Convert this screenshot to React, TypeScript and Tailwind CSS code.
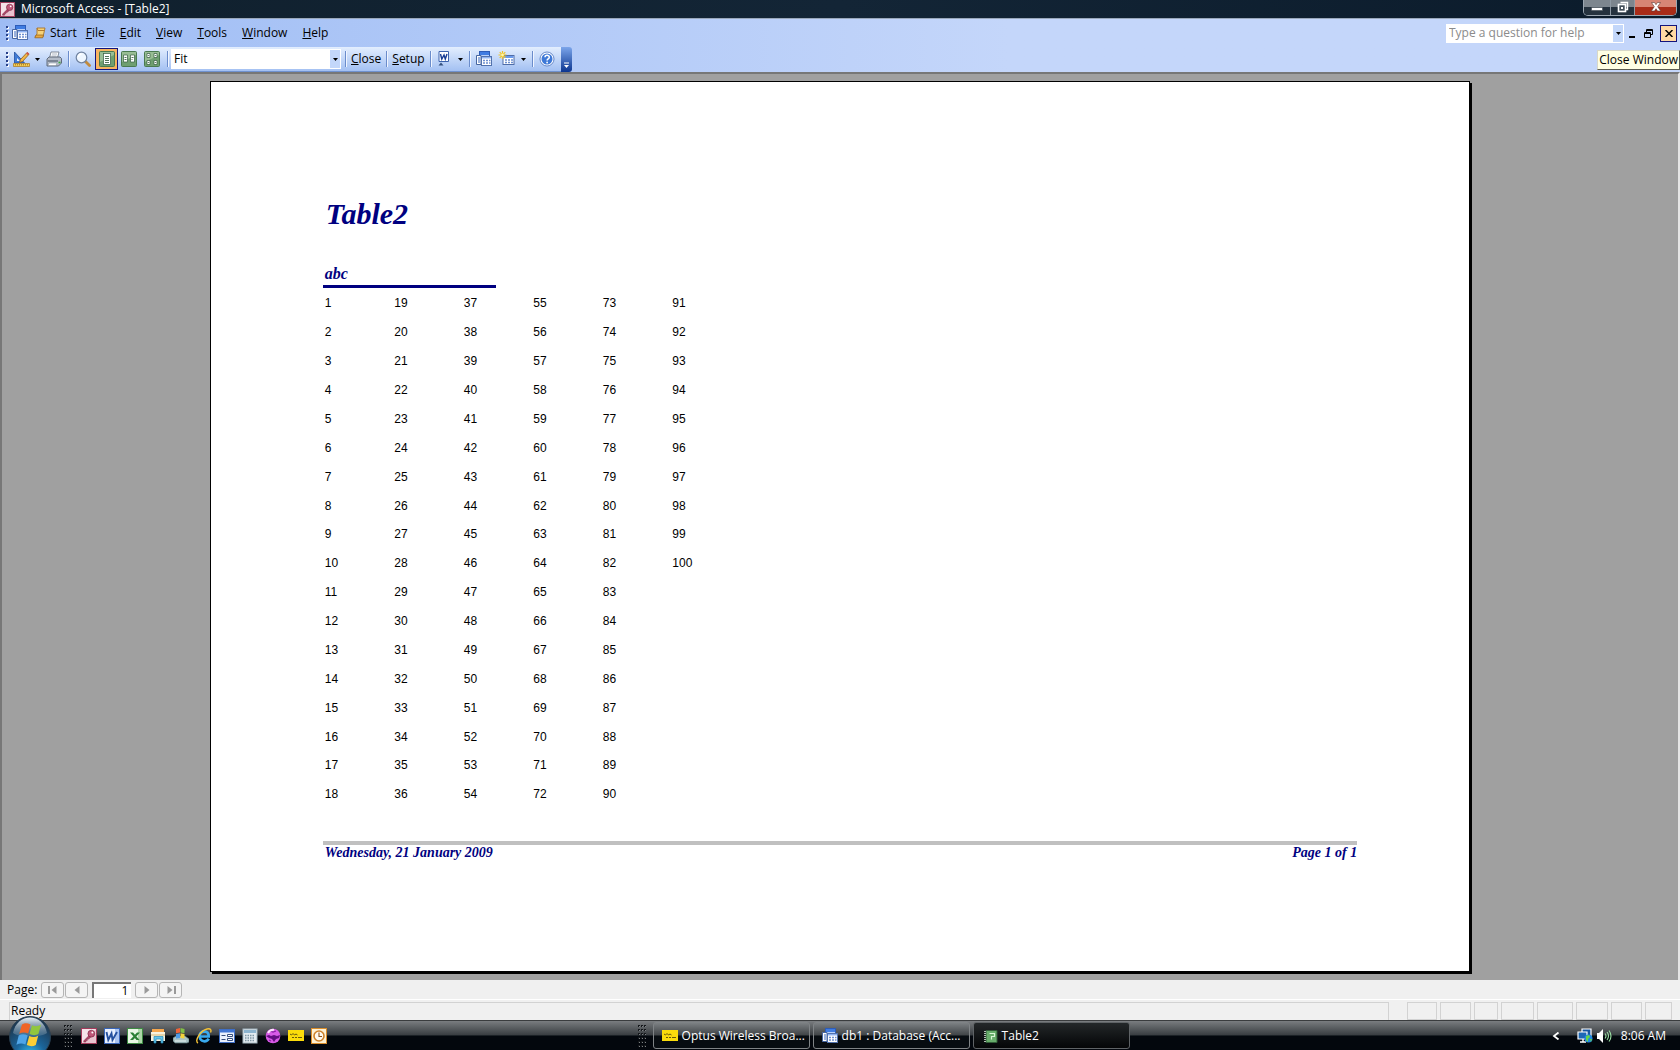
import type { ReactNode } from "react";

const MENUS = ["File", "Edit", "View", "Tools", "Window", "Help"];

const ROWS = 18;
const COLUMNS = 6;
const LAST_VALUE = 100;
// The fifth column ends at 90, the sixth holds the remaining ten values
const rowValues = (row: number) =>
    Array.from({ length: COLUMNS }, (_, col) => col * ROWS + row + 1).map((n) => (n <= LAST_VALUE ? n : null));

const STATUS_CELLS = ["w-[30px]", "w-[31px]", "w-[24px]", "w-[33px]", "w-[36px]", "w-[32px]", "w-[31px]", "w-[27px]"];

function Icon({ children, className = "w-4 h-4" }: { children: ReactNode; className?: string }) {
    return (
        <svg viewBox="0 0 16 16" className={`${className} shrink-0`} aria-hidden="true">
            {children}
        </svg>
    );
}

function Caret({ className = "" }: { className?: string }) {
    return (
        <svg viewBox="0 0 5 3" className={`w-[5px] h-[3px] shrink-0 ${className}`} aria-hidden="true">
            <path d="M0 0h5L2.500 3z" fill="#000" />
        </svg>
    );
}

function Grip() {
    return (
        <svg viewBox="0 0 3 15" className="w-[3px] h-[15px] shrink-0" aria-hidden="true">
            {[0, 4, 8, 12].map((y) => (
                <g key={y}>
                    <rect x="1" y={y + 1} width="2" height="2" fill="#fff" />
                    <rect x="0" y={y} width="2" height="2" fill="#27418a" />
                </g>
            ))}
        </svg>
    );
}

function TaskGrip() {
    return (
        <svg viewBox="0 0 9 22" className="w-[9px] h-[22px] shrink-0" aria-hidden="true">
            {[0, 4, 8, 12, 16, 20].map((y) =>
                [0, 3, 6].map((x) => (
                    <g key={`${x}-${y}`}>
                        <rect x={x} y={y} width="2" height="2" fill="#15181b" />
                        <rect x={x + 1} y={y + 1} width="1" height="1" fill="#7c8084" />
                    </g>
                ))
            )}
        </svg>
    );
}

function Separator() {
    return <span className="w-px h-4 bg-[#6a8ccb] shadow-[1px_0_0_#f0f5ff] shrink-0" />;
}

function KeyIcon({ className }: { className?: string }) {
    return (
        <Icon className={className}>
            <rect x="0.5" y="0.5" width="15" height="15" fill="#f6e3e9" stroke="#a43c5c" />
            <path d="M1 15L15 1v14z" fill="#e9c3cf" />
            <path d="M8 7.500l-5.200 5.300V14h2v-1.400h1.400v-1.500h1.300L9.500 9.500z" fill="#b0486a" stroke="#7d2440" strokeWidth=".5" />
            <circle cx="10.300" cy="5.700" r="3.400" fill="#c0587a" stroke="#7d2440" strokeWidth=".7" />
            <circle cx="11.400" cy="4.600" r="1" fill="#fff" />
        </Icon>
    );
}

function DatabaseIcon({ className }: { className?: string }) {
    return (
        <Icon className={className}>
            <rect x="3.500" y=".5" width="10" height="9" fill="#b9d2fb" stroke="#2d5cb8" />
            <path d="M4 1h9v3H4z" fill="#3f7ce2" />
            <path d="M.5 4.500H5v9H.5z" fill="#fff" stroke="#46659f" />
            <path d="M2 7h2M2 9h2M2 11h2" stroke="#3565bd" />
            <rect x="5.500" y="5.500" width="10" height="9" fill="#fff" stroke="#5272ad" />
            <path d="M6 6h9v1.500H6z" fill="#8fb3f2" />
            <path d="M7 9.500h2M10 9.500h2M13 9.500h1.500M7 12h2M10 12h2M13 12h1.500" stroke="#6c8fd0" strokeWidth="1.300" />
        </Icon>
    );
}

function PageViewIcon({ pages }: { pages: 1 | 2 | 4 }) {
    return (
        <Icon>
            <rect x=".5" y=".5" width="15" height="15" rx="1" fill="#6f9f70" stroke="#4a7a50" />
            <path d="M1 1h14v3L1 11z" fill="#b4d2ac" opacity=".6" />
            {pages === 1 && (
                <>
                    <rect x="4.500" y="2.500" width="7" height="11" fill="#fff" stroke="#355b40" strokeWidth=".7" />
                    <path d="M6 5.500h4M6 7.500h4M6 9.500h4M6 11.500h4" stroke="#42654b" strokeWidth=".9" />
                </>
            )}
            {pages === 2 && (
                <>
                    <path d="M2.500 4h4v7h-4zM9.500 4h4v7h-4z" fill="#fff" stroke="#355b40" strokeWidth=".7" />
                    <path d="M3.500 6.500h2M3.500 8.500h2M10.500 6.500h2M10.500 8.500h1" stroke="#42654b" strokeWidth=".9" />
                </>
            )}
            {pages === 4 && (
                <>
                    <path d="M3 2.500h3v4H3zM10 2.500h3v4h-3zM3 9.500h3v4H3zM10 9.500h3v4h-3z" fill="#fff" stroke="#355b40" strokeWidth=".7" />
                    <path d="M3.800 4.500h1.400M10.800 4.500h1.400M3.800 11.500h1.400M10.800 11.500h1.400" stroke="#42654b" strokeWidth=".8" />
                </>
            )}
        </Icon>
    );
}

function DesignIcon() {
    return (
        <Icon className="w-[17px] h-4">
            <path d="M1 1v11h10z" fill="#3f7bd6" stroke="#204f9f" strokeWidth=".8" />
            <path d="M3.500 7v3h3z" fill="#e7f1ff" />
            <path d="M0 12.500h16v3H0z" fill="#f6cf52" stroke="#a9751c" strokeWidth=".7" />
            <path d="M2 13v1.500M4 13v1.500M6 13v1.500M8 13v1.500M10 13v1.500M12 13v1.500M14 13v1.500" stroke="#865c16" strokeWidth=".6" />
            <path d="M6 11.500l1-3L13.500 1.500l2 1.800L9 10.500z" fill="#f3b847" stroke="#8c5b19" strokeWidth=".8" />
            <path d="M12.600 2.500l1.200-1.600 2 1.800-1.300 1.500z" fill="#cf554c" />
        </Icon>
    );
}

function PrinterIcon() {
    return (
        <Icon>
            <path d="M5 1h8l-1.500 6h-8z" fill="#fff" stroke="#65707f" strokeWidth=".8" />
            <path d="M6 3h5M5.500 5h5" stroke="#9da6b5" strokeWidth=".8" />
            <path d="M1 8l2-2h11l1.500 1.500V12l-3 3H1z" fill="#b4bcc8" stroke="#566070" strokeWidth=".9" />
            <path d="M1.500 9h10.500v2H1.500z" fill="#7b8594" />
            <path d="M3 12h8l-1 2.500H2z" fill="#fff" stroke="#7b8594" strokeWidth=".5" />
            <path d="M12.500 11.500h2" stroke="#38a83e" strokeWidth="1.600" />
        </Icon>
    );
}

function MagnifierIcon() {
    return (
        <Icon>
            <path d="M10.500 10.500l4 4" stroke="#c28b3e" strokeWidth="2.800" strokeLinecap="round" />
            <circle cx="6.500" cy="6.500" r="5.300" fill="#eef6ff" stroke="#7184a1" strokeWidth="1.200" />
            <path d="M3.500 6a3.300 3.300 0 013-3" stroke="#fff" strokeWidth="1.400" fill="none" />
        </Icon>
    );
}

function WordLinkIcon() {
    return (
        <Icon>
            <path d="M3 .5h9.500v10H3z" fill="#fff" stroke="#3c62ad" />
            <path d="M4.500 3l1.300 5L8 4l1.300 4L11 3" fill="none" stroke="#173c94" strokeWidth="1.400" />
            <path d="M2.500 14.500h5L5 11.500z" fill="#33507f" />
        </Icon>
    );
}

function NewObjectIcon() {
    return (
        <Icon className="w-[17px] h-4">
            <rect x="4.500" y="4.500" width="11" height="9" fill="#fff" stroke="#4f6da8" />
            <path d="M5 5h10v2H5z" fill="#6b9bed" />
            <path d="M6.500 9h2M9.500 9h2M12.500 9h2M6.500 11.500h2M9.500 11.500h2M12.500 11.500h2" stroke="#6c8fd0" strokeWidth="1.300" />
            <path d="M4 0v8M0 4h8M1.200 1.200l5.600 5.600M6.800 1.200L1.200 6.800" stroke="#f0c323" strokeWidth="1.200" />
            <circle cx="4" cy="4" r="1.400" fill="#fff6a8" />
        </Icon>
    );
}

function HelpIcon() {
    return (
        <Icon>
            <circle cx="8" cy="8" r="7" fill="#fff" stroke="#4770bd" strokeWidth=".8" />
            <circle cx="8" cy="8" r="5.500" fill="#3e79d7" />
            <path d="M6 6.300C6 3.700 10.300 3.700 10.300 6.200c0 1.600-2.200 1.700-2.200 3.300" fill="none" stroke="#fff" strokeWidth="1.500" />
            <circle cx="8.100" cy="11.500" r=".9" fill="#fff" />
        </Icon>
    );
}

function ScrollIcon() {
    return (
        <svg viewBox="0 0 12 12" className="w-3 h-3 shrink-0" aria-hidden="true">
            <path d="M3 1h8L9 10H1l2-3z" fill="#f7d379" stroke="#a8742a" strokeWidth=".9" />
            <path d="M3 1l1 2.500h6" fill="none" stroke="#b17b31" />
            <path d="M.8 10.800L2 8h7.500l-.8 2.800z" fill="#e7a93f" stroke="#916021" strokeWidth=".7" />
        </svg>
    );
}

function LetterTile({ kind }: { kind: "word" | "excel" }) {
    const word = kind === "word";
    return (
        <Icon>
            <rect x=".5" y=".5" width="15" height="15" fill={word ? "#e8f0ff" : "#e9f7e6"} stroke={word ? "#3a66b8" : "#3e8a43"} />
            <path d="M11 1h4v14h-4z" fill={word ? "#aac4f1" : "#acd6a8"} />
            {word ? (
                <path d="M2.500 4l1.800 8L7.500 5.500 8.500 12l4.500-8" fill="none" stroke="#24509f" strokeWidth="1.900" />
            ) : (
                <path d="M3 4.500h3l6.500 7.500H9.500zM10 4.500h3L6 12H3z" fill="#2b8035" />
            )}
        </Icon>
    );
}

function OptusIcon() {
    return (
        <svg viewBox="0 0 16 11" className="w-4 h-[11px] shrink-0" aria-hidden="true">
            <rect width="16" height="11" fill="#fbdc0b" />
            <path d="M2 4l1.500 1L5 3.500 6.500 5 8 4l1.500 1M4 7.500h2M7 7.500h2M10 7.500h4" stroke="#66560d" strokeWidth="1" fill="none" />
        </svg>
    );
}

const QUICK_LAUNCH: { name: string; icon: ReactNode }[] = [
    { name: "Microsoft Access", icon: <KeyIcon /> },
    { name: "Microsoft Word", icon: <LetterTile kind="word" /> },
    { name: "Microsoft Excel", icon: <LetterTile kind="excel" /> },
    {
        name: "Explorer",
        icon: (
            <Icon>
                <path d="M2 1h12v5H2z" fill="#f5a64e" />
                <path d="M1 4h14v9H1z" fill="#f7f2df" />
                <path d="M1 7h14" stroke="#d5b777" />
                <path d="M4 15V8.500h9V15h-2v-4H6v4z" fill="#64c3ea" stroke="#248bb9" strokeWidth=".7" />
            </Icon>
        ),
    },
    {
        name: "Messenger",
        icon: (
            <Icon>
                <path d="M0 10l3-2h9l4 3v3l-2 1H2l-2-2z" fill="#a9c3c6" stroke="#5b767a" strokeWidth=".7" />
                <path d="M3 1l4-1v4.500l-4 .8z" fill="#ef6338" />
                <path d="M7.500 0l4 1v4.300l-4-.8z" fill="#82be45" />
                <path d="M3 6l4-.8V10l-4 .5z" fill="#4f9be6" />
                <path d="M7.500 5.200l4 .8v4.500l-4-.5z" fill="#f3d33b" />
                <path d="M2 13h11" stroke="#e8f2f1" />
            </Icon>
        ),
    },
    {
        name: "Internet Explorer",
        icon: (
            <Icon>
                <path d="M12.800 10.800A5 5 0 118.200 3.300c2.800 0 4.600 2 4.500 5.200H4.500" fill="none" stroke="#39a9ee" strokeWidth="2.700" />
                <path d="M2 15C-2 13 4.500 2.500 11 1c4-1 4.500 1.500 3.500 3.500" fill="none" stroke="#f4c136" strokeWidth="1.400" />
            </Icon>
        ),
    },
    {
        name: "Form",
        icon: (
            <Icon>
                <rect x=".5" y="1.500" width="15" height="13" fill="#e9f0fd" stroke="#3f6ec5" />
                <path d="M1 2h14v2.500H1z" fill="#3f75d4" />
                <path d="M2.500 7.500h4M2.500 11.500h4" stroke="#354d7c" />
                <path d="M8.500 6.500h5v2h-5zM8.500 10.500h5v2h-5z" fill="#fff" stroke="#354d7c" />
            </Icon>
        ),
    },
    {
        name: "Calculator",
        icon: (
            <Icon>
                <rect x="1" y="1" width="14" height="14" fill="#e3ebf0" stroke="#a5b8c2" />
                <path d="M2 2h12v3H2z" fill="#8db4cf" />
                <path d="M3 7.500h10M3 10h10M3 12.500h10" stroke="#7d95a3" strokeWidth="1.300" strokeDasharray="1.500 1" />
            </Icon>
        ),
    },
    {
        name: "Globe",
        icon: (
            <Icon>
                <circle cx="8" cy="8" r="7.300" fill="#d95be8" />
                <path d="M1 8l3-1 2 1 3-1 3 1 3-1-1 3-3 1-2 3-2-3-3-1z" fill="#650e82" />
                <path d="M5 3l3 1 3-1M4 12l2 1" stroke="#8a1fa6" strokeWidth="1.200" fill="none" />
                <path d="M3 5A6 6 0 019 1.800" stroke="#ffe4ff" strokeWidth="1.800" fill="none" />
            </Icon>
        ),
    },
    { name: "Optus", icon: <OptusIcon /> },
    {
        name: "Outlook",
        icon: (
            <Icon>
                <rect x=".5" y=".5" width="15" height="15" fill="#fff1d2" stroke="#d98d2b" />
                <circle cx="8" cy="8" r="5" fill="#fffaf0" stroke="#cf8129" strokeWidth="1.600" />
                <path d="M8 4.500V8.500h3" stroke="#8c5119" strokeWidth="1.100" fill="none" />
            </Icon>
        ),
    },
];

const TASKS = [
    { title: "Optus Wireless Broa...", icon: <OptusIcon />, active: false },
    { title: "db1 : Database (Acc...", icon: <DatabaseIcon />, active: false },
    {
        title: "Table2",
        icon: (
            <Icon>
                <path d="M4 2.500h11v12H4z" fill="#68ad6b" stroke="#315d38" />
                <path d="M7.500 5.500h5v3h-3v3" fill="none" stroke="#d8f5d5" strokeWidth="1.200" />
                <path d="M3 3v12" stroke="#e8f3e8" strokeWidth="1.500" strokeDasharray="1 1" />
            </Icon>
        ),
        active: true,
    },
];

function TitleBar() {
    return (
        <header className="h-[19px] flex items-start justify-between bg-linear-to-r from-[#10202d] via-[#132536] to-[#0b1b2b] border-b border-[#9aa8bb]">
            <div className="flex items-center h-[18px] gap-[6px]">
                <KeyIcon className="w-[15px] h-[15px]" />
                <h1 className="text-[12px] leading-4 text-white">Microsoft Access - [Table2]</h1>
            </div>
            <div className="flex h-4 mr-[3px] rounded-b-[5px] border border-t-0 border-[#9ba6b0] overflow-hidden">
                <button aria-label="Minimize" className="w-[27px] flex justify-center bg-linear-to-b from-[#7d868e] from-45% to-[#25323e] to-50% border-r border-[#8e99a3]">
                    <svg viewBox="0 0 12 15" className="w-3 h-[15px]">
                        <rect x=".5" y="7.500" width="11" height="3" fill="#fff" stroke="#3d4650" strokeWidth=".6" />
                    </svg>
                </button>
                <button aria-label="Restore" className="w-6 flex justify-center bg-linear-to-b from-[#7d868e] from-45% to-[#25323e] to-50% border-r border-[#8e99a3]">
                    <svg viewBox="0 0 12 15" className="w-3 h-[15px]">
                        <path d="M3.500 2.500h7v7h-2" fill="none" stroke="#fff" strokeWidth="1.400" />
                        <rect x="1.500" y="4.500" width="7" height="7" fill="#44505b" stroke="#fff" strokeWidth="1.600" />
                        <rect x="4" y="7" width="2" height="2" fill="#fff" />
                    </svg>
                </button>
                <button aria-label="Close" className="w-[41px] flex justify-center bg-linear-to-b from-[#d78574] from-45% to-[#a92c18] to-50%">
                    <svg viewBox="0 0 12 15" className="w-3 h-[15px]">
                        <path d="M1.500 2.500h3L6 4.700l1.500-2.200h3L7.700 6.700l3 4.300h-3.200L6 8.700 4.500 11H1.300l3-4.300z" fill="#fff" stroke="#5c3a36" strokeWidth=".6" />
                    </svg>
                </button>
            </div>
        </header>
    );
}

function MenuBar() {
    return (
        <div className="h-7 flex items-center justify-between pl-[6px] pr-[3px]">
            <nav className="flex items-center text-[12px] leading-4">
                <Grip />
                <span className="flex ml-[3px] mr-[6px]"><DatabaseIcon /></span>
                <button className="flex items-center gap-1 mr-[9px]">
                    <ScrollIcon />
                    Start
                </button>
                <div className="flex gap-[15px]">
                    {MENUS.map((menu) => (
                        <button key={menu}>
                            <u>{menu[0]}</u>{menu.slice(1)}
                        </button>
                    ))}
                </div>
            </nav>
            <div className="flex items-center">
                <div className="flex h-[19px] w-[178px] bg-white">
                    <input
                        aria-label="Type a question for help"
                        placeholder="Type a question for help"
                        className="flex-1 min-w-0 pl-[3px] text-[12px] leading-4 outline-none placeholder:text-[#8b8b8b]"
                    />
                    <button aria-label="Recent questions" className="w-3 flex items-center justify-center bg-[#c3d7fa] border border-white">
                        <Caret />
                    </button>
                </div>
                <button aria-label="Minimize Window" className="ml-[5px] w-[7px] h-4 flex items-end pb-[3px]">
                    <span className="w-[6px] h-[2px] bg-black" />
                </button>
                <button aria-label="Restore Window" className="ml-2">
                    <svg viewBox="0 0 9 9" className="w-[9px] h-[9px] block">
                        <path d="M2.500 3V.5h6v5H6.500M2.500 1.500h6" fill="none" stroke="#000" />
                        <path d="M.5 3.500h6v5h-6zM.5 4.500h6" fill="none" stroke="#000" />
                    </svg>
                </button>
                <button aria-label="Close Window" className="ml-[7px] w-[17px] h-[17px] flex items-center justify-center bg-[#ffd9a5] border border-[#14147c]">
                    <svg viewBox="0 0 8 7" className="w-2 h-[7px]">
                        <path d="M.5 0l7 7M7.500 0l-7 7" stroke="#000" strokeWidth="1.500" />
                    </svg>
                </button>
            </div>
        </div>
    );
}

function Toolbar() {
    return (
        <div className="flex h-[25px]">
            <div className="flex items-center pl-[6px] bg-linear-to-b from-[#e3eefe] to-[#a3c0f2] border-b border-[#7092cf] text-[12px] leading-4">
                <Grip />
                <button aria-label="Design view" className="flex items-center gap-[5px] ml-1">
                    <DesignIcon />
                    <Caret />
                </button>
                <button aria-label="Print" className="flex mx-[6px]"><PrinterIcon /></button>
                <Separator />
                <button aria-label="Zoom" className="flex ml-[6px]"><MagnifierIcon /></button>
                <button aria-label="One page" className="ml-1 w-[23px] h-[22px] flex items-center justify-center border border-[#14147c] bg-[#f8b45f]">
                    <PageViewIcon pages={1} />
                </button>
                <button aria-label="Two pages" className="flex ml-[3px]"><PageViewIcon pages={2} /></button>
                <button aria-label="Multiple pages" className="flex mx-[7px]"><PageViewIcon pages={4} /></button>
                <Separator />
                <div className="flex items-center h-5 w-[170px] ml-[3px] mr-1 bg-white relative">
                    <select aria-label="Zoom level" className="appearance-none w-full h-5 pl-[3px] outline-none">
                        <option>Fit</option>
                    </select>
                    <span className="absolute right-0 inset-y-0 w-3 flex items-center justify-center bg-[#c3d7fa] border border-white pointer-events-none">
                        <Caret />
                    </span>
                </div>
                <Separator />
                <button className="mx-[5px]"><u>C</u>lose</button>
                <Separator />
                <button className="mx-[5px]"><u>S</u>etup</button>
                <Separator />
                <button aria-label="Office links" className="flex items-center gap-[6px] mx-[5px]">
                    <WordLinkIcon />
                    <Caret className="mr-px" />
                </button>
                <Separator />
                <button aria-label="Database window" className="flex ml-[6px]"><DatabaseIcon /></button>
                <button aria-label="New object" className="flex items-center gap-[6px] mx-[6px]">
                    <NewObjectIcon />
                    <Caret />
                </button>
                <Separator />
                <button aria-label="Help" className="flex mx-[6px]"><HelpIcon /></button>
            </div>
            <button aria-label="Toolbar options" className="w-[11px] flex items-end justify-center pb-[3px] rounded-r-[3px] bg-linear-to-b from-[#7ca5ea] to-[#0c3590]">
                <svg viewBox="0 0 7 7" className="w-[7px] h-[7px]">
                    <path d="M1 1h5" stroke="#fff" />
                    <path d="M1 3h5L3.500 6z" fill="#fff" />
                </svg>
            </button>
        </div>
    );
}

function ReportPage() {
    return (
        <article className="w-[75.2%] aspect-[297/210] px-[112px] pt-[114px] bg-white border border-black shadow-[2px_2px_0_#000] text-[#000080]">
            <h2 className="pl-[3px] font-['Liberation_Serif',serif] font-bold italic text-[30px] leading-9">Table2</h2>
            <table className="mt-7 w-[417px] h-[549px] table-fixed border-collapse font-['Liberation_Sans',sans-serif] text-[12px] leading-4 text-black">
                <thead>
                    <tr className="h-[29px]">
                        <th colSpan={6} scope="col" className="text-left p-0">
                            <span className="block w-[173px] h-[26px] pl-[2px] pt-[2px] border-b-[3px] border-[#000080] font-['Liberation_Serif',serif] font-bold italic text-[16px] leading-5 text-[#000080]">
                                abc
                            </span>
                        </th>
                    </tr>
                </thead>
                <tbody>
                    {Array.from({ length: ROWS }, (_, row) => (
                        <tr key={row}>
                            {rowValues(row).map((value, col) => (
                                <td key={col} className="p-0 pl-[2px] align-middle">{value}</td>
                            ))}
                        </tr>
                    ))}
                </tbody>
            </table>
            <footer className="mt-8 pl-[2px] flex justify-between border-t-4 border-[#c0c0c0] font-['Liberation_Serif',serif] font-bold italic text-[14px] leading-4">
                <span>Wednesday, 21 January 2009</span>
                <span>Page 1 of 1</span>
            </footer>
        </article>
    );
}

function NavButton({ label, d }: { label: string; d: string }) {
    return (
        <button aria-label={label} className="w-[23px] h-4 flex items-center justify-center rounded-[3px] border border-[#b5b5b5] bg-[#f4f4f4]">
            <svg viewBox="0 0 10 8" className="w-[10px] h-2">
                <path d={d} fill="#9a9a9a" />
            </svg>
        </button>
    );
}

function PageNavigator() {
    return (
        <div className="h-5 flex items-center pl-[7px] bg-[#f0f0f0] border-b border-white text-[12px] leading-4">
            <label htmlFor="page-number" className="mr-1">Page:</label>
            <div className="flex gap-px">
                <NavButton label="First page" d="M0 0h2v8H0zM8.500 0v8L3.500 4z" />
                <NavButton label="Previous page" d="M7.500 0v8L2.500 4z" />
            </div>
            <input
                id="page-number"
                defaultValue="1"
                className="w-[39px] h-4 mx-1 pr-[3px] text-right bg-white border-t-2 border-l-2 border-[#777] outline-none"
            />
            <div className="flex gap-px">
                <NavButton label="Next page" d="M2.500 0v8l5-4z" />
                <NavButton label="Last page" d="M8 0h2v8H8zM1.500 0v8l5-4z" />
            </div>
        </div>
    );
}

function StatusBar() {
    return (
        <div className="h-5 flex pt-[2px] pl-[9px] pr-2 bg-[#f0f0f0] text-[12px] leading-4">
            <div className="flex-1 mr-[18px] pl-px border border-b-0 border-[#d2d2d2]">Ready</div>
            <div className="flex gap-[3px]">
                {STATUS_CELLS.map((width, i) => (
                    <span key={i} className={`${width} border border-[#d2d2d2]`} />
                ))}
            </div>
        </div>
    );
}

function Taskbar() {
    return (
        <div className="h-[30px] flex items-center bg-linear-to-b from-[#7a7d80] from-0% via-[#3a3e42] via-48% to-[#03070d] to-52% border-t border-[#3a3c3e] text-[12px] leading-4 text-white">
            <button aria-label="Start menu" className="w-[43px] h-[30px] ml-[9px] flex items-end shrink-0 z-10">
                <svg viewBox="0 0 43 35" className="w-[43px] h-[35px] shrink-0">
                    <defs>
                        <radialGradient id="orb" cx="50%" cy="95%" r="80%">
                            <stop offset="0" stopColor="#35c3f2" />
                            <stop offset=".45" stopColor="#1b659b" />
                            <stop offset="1" stopColor="#1d3a54" />
                        </radialGradient>
                        <linearGradient id="gloss" x1="0" y1="0" x2="0" y2="1">
                            <stop offset="0" stopColor="#e8f1f7" />
                            <stop offset="1" stopColor="#7893a8" stopOpacity=".3" />
                        </linearGradient>
                    </defs>
                    <circle cx="21" cy="21" r="20.500" fill="url(#orb)" stroke="#2a4052" />
                    <path d="M4 17C6 7 13 1.500 21 1.500S36 7 38 17C30 22 12 22 4 17z" fill="url(#gloss)" />
                    <path d="M13 8.500c3-2 5.500-1.500 8.500 0l-2.300 9c-3-1.500-6-1.500-9 .2z" fill="#ef6527" />
                    <path d="M23 9.300c3 1.300 6 1.300 9-.7l-2.500 9.200c-3 2-6 1.700-9 .3z" fill="#91c73e" />
                    <path d="M9.700 19.500c3-1.800 6-1.500 9 0l-2.300 9c-3-1.500-6-1.500-9 .3z" fill="#4fa5e8" />
                    <path d="M20.200 20c3 1.500 6 1.500 9-.3l-2.400 9.200c-3 2-6 1.500-9 .2z" fill="#fbce36" />
                </svg>
            </button>
            <div className="flex flex-1 items-center pl-3">
                <TaskGrip />
                <div className="flex items-center gap-[7px] ml-2">
                    {QUICK_LAUNCH.map((item) => (
                        <button key={item.name} aria-label={item.name}>{item.icon}</button>
                    ))}
                </div>
            </div>
            <div className="w-[63%] flex items-center shrink-0">
                <div className="flex flex-1 items-center gap-[3px] pl-[16px]">
                    <TaskGrip />
                    <div className="flex gap-[3px] ml-[3px]">
                        {TASKS.map((task) => (
                            <button
                                key={task.title}
                                className={`w-[157px] h-[27px] flex items-center gap-1 pl-2 whitespace-nowrap rounded-[3px] border ${
                                    task.active
                                        ? "border-[#5f6366] bg-linear-to-b from-[#24282a] to-[#050607]"
                                        : "border-[#7f8386] bg-linear-to-b from-[#7c8083] from-0% via-[#414548] via-48% to-[#070c11] to-52%"
                                }`}
                            >
                                {task.icon}
                                <span>{task.title}</span>
                            </button>
                        ))}
                    </div>
                </div>
                <div className="flex items-center pr-[14px]">
                    <button aria-label="Show hidden icons">
                        <svg viewBox="0 0 8 8" className="w-2 h-2 block">
                            <path d="M6.500 .5L2 4l4.500 3.500" fill="none" stroke="#fff" strokeWidth="1.800" />
                        </svg>
                    </button>
                    <span className="flex ml-[17px]">
                        <Icon>
                            <path d="M5 1h9v8H5z" fill="#1555a0" stroke="#fff" strokeWidth="1.200" />
                            <path d="M1 4h9v7H1z" fill="#1d67b5" stroke="#fff" strokeWidth="1.200" />
                            <path d="M3 14h6M6 11v3" stroke="#fff" strokeWidth="1.400" />
                            <circle cx="11.500" cy="10.500" r="4" fill="#2087df" />
                            <path d="M9 8l3-1 1 2-2 2v3l-2-2zM13 11l2 0-1 3z" fill="#64d448" />
                        </Icon>
                    </span>
                    <span className="flex ml-[3px]">
                        <Icon>
                            <path d="M1 5h2l4-4v14l-4-4H1z" fill="#fff" />
                            <path d="M9 5.500q2 2.500 0 5M11 4q3 4 0 8M13 2.500q4 5.500 0 11" fill="none" stroke="#9be0a3" strokeWidth="1.100" />
                        </Icon>
                    </span>
                    <time className="ml-[9px]">8:06 AM</time>
                </div>
            </div>
        </div>
    );
}

export default function App() {
    return (
        <div className="min-h-screen flex flex-col overflow-hidden bg-[#f0f0f0] font-['Open_Sans',sans-serif] text-black">
            <TitleBar />
            <div className="relative bg-linear-to-r from-[#9ebcf4] to-[#c4d6fa] to-60%">
                <MenuBar />
                <Toolbar />
                <div role="tooltip" className="absolute right-0 bottom-[2px] h-5 px-px bg-[#ffffe3] border border-[#5c5c50] border-t-[#d8d8c8] border-l-[#d8d8c8] text-[12px] leading-[18px]">
                    Close Window
                </div>
            </div>
            <main className="flex-1 flex justify-center items-start pt-[7px] pb-[6px] bg-[#a0a0a0] border-t-2 border-l-2 border-t-[#777] border-l-[#777] border-r-2 border-r-[#e6e6e6]">
                <ReportPage />
            </main>
            <PageNavigator />
            <StatusBar />
            <Taskbar />
        </div>
    );
}
